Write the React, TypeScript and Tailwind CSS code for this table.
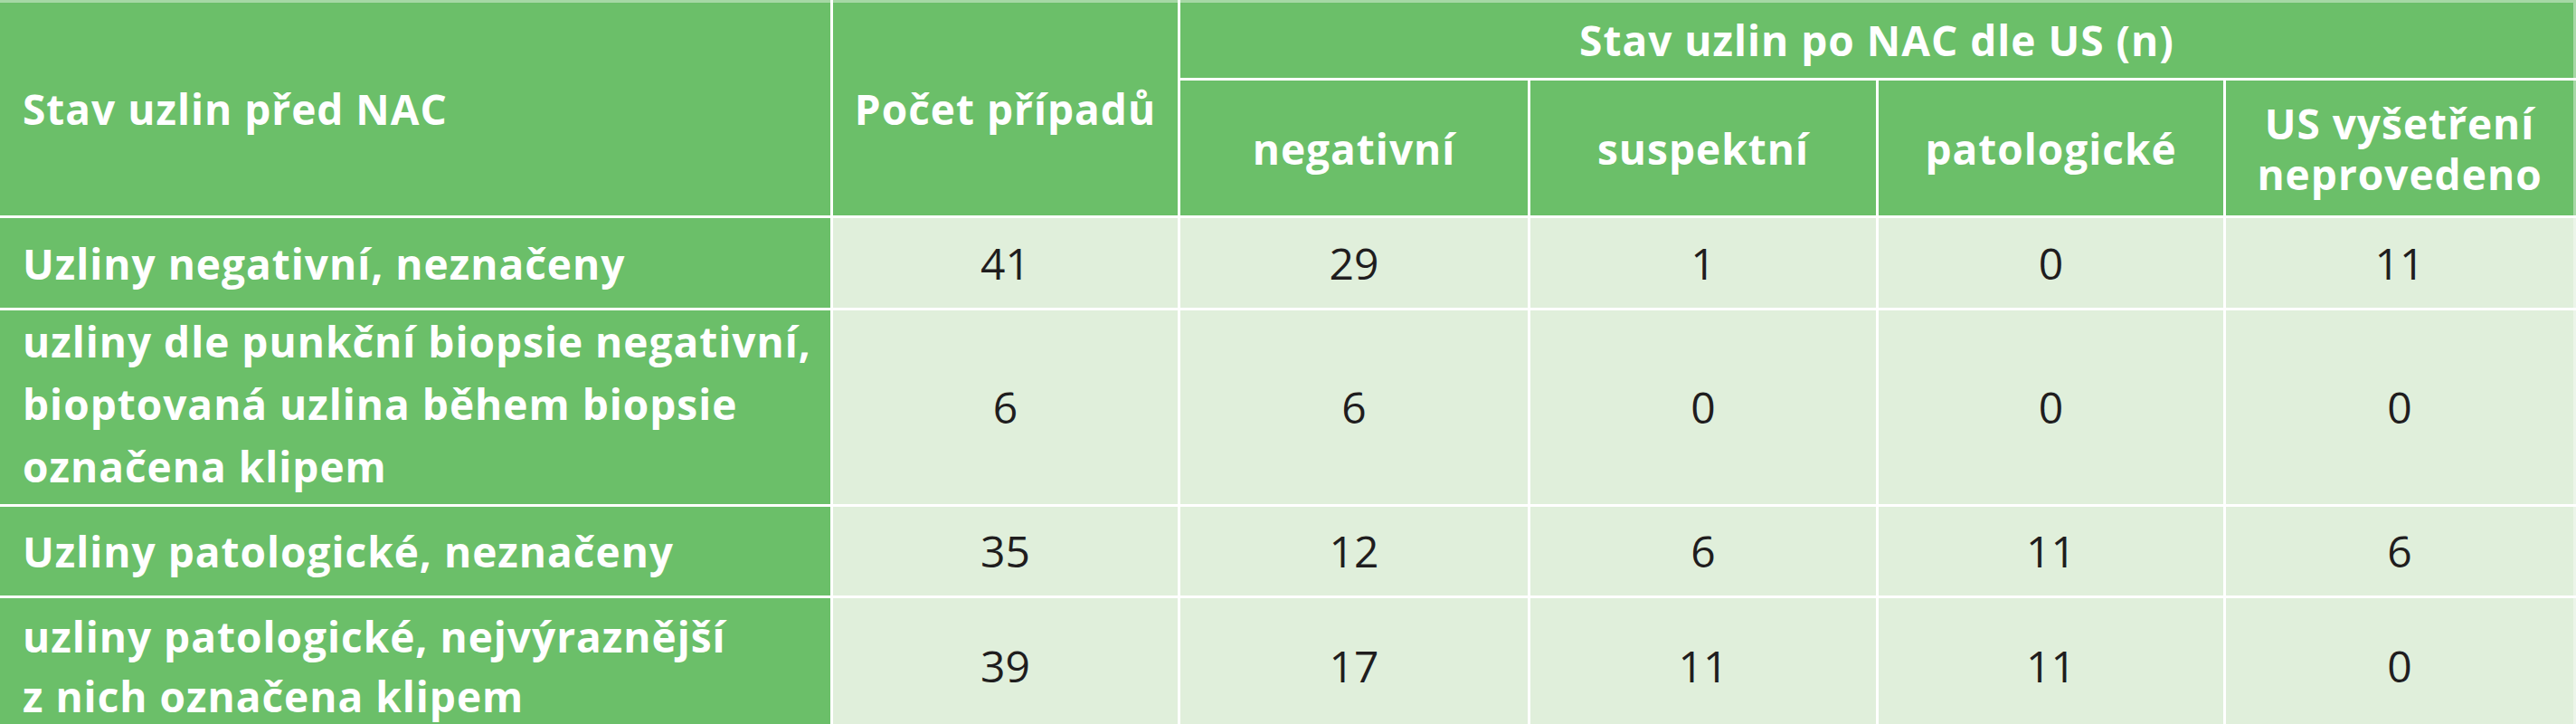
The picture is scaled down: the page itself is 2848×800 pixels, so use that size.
const rows = [
  { label: ['Uzliny negativní, neznačeny'], values: ['41', '29', '1', '0', '11'], box: 'leading-[68px]' },
  {
    label: ['uzliny dle punkční biopsie negativní,', 'bioptovaná uzlina během biopsie', 'označena klipem'],
    values: ['6', '6', '0', '0', '0'],
    box: 'leading-[69px] pb-[8px]',
  },
  { label: ['Uzliny patologické, neznačeny'], values: ['35', '12', '6', '11', '6'], box: 'leading-[68px]' },
  {
    label: ['uzliny patologické, nejvýraznější', 'z nich označena klipem'],
    values: ['39', '17', '11', '11', '0'],
    box: 'leading-[66px]',
  },
];

const subHeads = [['negativní'], ['suspektní'], ['patologické'], ['US vyšetření', 'neprovedeno']];

export default function App() {
  return (
    <div className="w-[2848px] h-[800px] overflow-hidden bg-white font-['Open_Sans','Noto_Sans',sans-serif]">
      <div className="grid grid-cols-[918px_381px_384px_382px_381px_1fr] grid-rows-[86px_149px_99px_214px_98px_150px] gap-[3px] bg-white">
        {/* header, first band */}
        <div className="row-span-2 flex items-center border-t-[3px] border-white/40 bg-[#6bbf69] pl-[25px] text-[46px] font-bold tracking-[1px] text-white">
          Stav uzlin před NAC
        </div>
        <div className="row-span-2 flex items-center justify-center border-t-[3px] border-white/40 bg-[#6bbf69] text-[46px] font-bold tracking-[1px] text-white">
          Počet případů
        </div>
        <div className="col-span-4 flex items-center justify-center border-t-[3px] border-r-[3px] border-white/40 bg-[#6bbf69] text-[46px] font-bold tracking-[1px] text-white">
          Stav uzlin po NAC dle US (n)
        </div>

        {/* header, second band */}
        {subHeads.map((h, i) => (
          <div
            key={h[0]}
            className={`flex flex-col items-center justify-center bg-[#6bbf69] text-center text-[46px] font-bold leading-[56px] tracking-[1px] text-white ${
              i === subHeads.length - 1 ? 'border-r-[3px] border-white/40' : ''
            }`}
          >
            {h.map((line) => (
              <span key={line} className="whitespace-nowrap">
                {line}
              </span>
            ))}
          </div>
        ))}

        {/* body */}
        {rows.map((r) => (
          <div key={r.label[0]} className="contents">
            <div
              className={`flex flex-col justify-center bg-[#6bbf69] pl-[25px] text-[46px] font-bold tracking-[1px] text-white ${r.box}`}
            >
              {r.label.map((line) => (
                <span key={line} className="whitespace-nowrap">
                  {line}
                </span>
              ))}
            </div>
            {r.values.map((v, i) => (
              <div
                key={i}
                className={`flex items-center justify-center bg-[#e0efdb] text-[48px] text-[#1f1d1e] ${
                  i === r.values.length - 1 ? 'border-r-[3px] border-white/40' : ''
                }`}
              >
                {v}
              </div>
            ))}
          </div>
        ))}
      </div>
    </div>
  );
}
